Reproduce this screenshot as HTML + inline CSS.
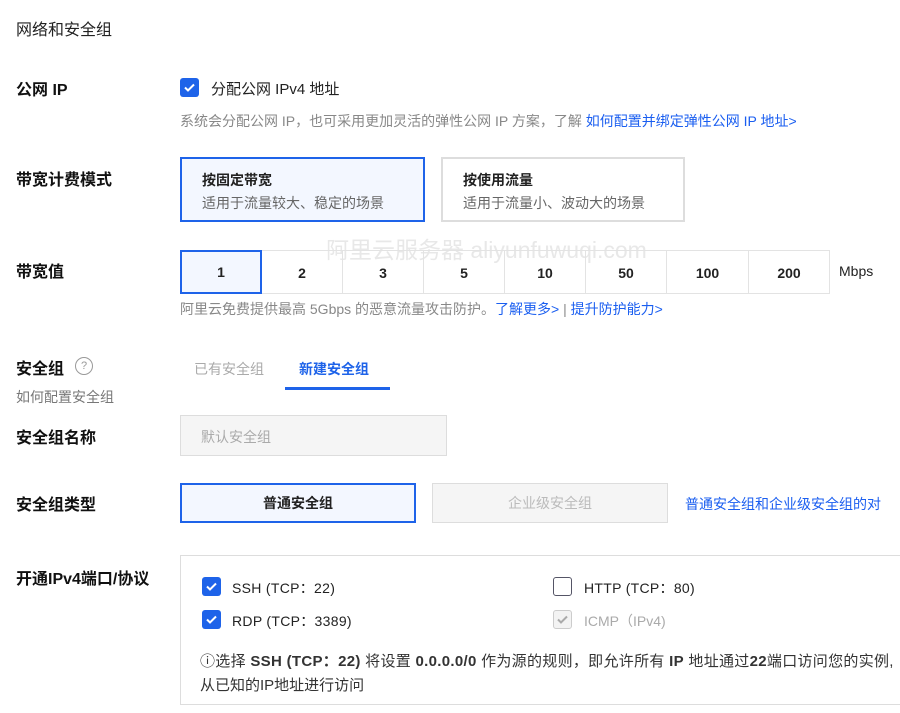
<!DOCTYPE html>
<html><head><meta charset="utf-8"><style>
body{margin:0;width:900px;height:713px;overflow:hidden;background:#fff;font-family:"Liberation Sans","Noto Sans CJK SC",sans-serif;color:#222;position:relative}
.a{position:absolute;white-space:nowrap}
.lb{font-size:16px;font-weight:bold;color:#111}
.g{color:#888;font-size:14px}
.bl{color:#1a5ef0}
.cb{position:absolute;width:19px;height:19px;border-radius:3px;background:#1e63e9}
.cb svg{position:absolute;left:3px;top:3px}
.seg{position:absolute;top:250px;height:44px;border:1px solid #e3e3e3;box-sizing:border-box;text-align:center;line-height:44px;font-size:14px;font-weight:bold;color:#222}
</style></head><body>
<div class="a" style="left:16px;top:16px;font-size:16px;color:#222">网络和安全组</div>

<div class="a lb" style="left:16px;top:76px">公网 IP</div>
<div class="cb" style="left:180px;top:78px"><svg width="13" height="13" viewBox="0 0 13 13"><path d="M2 6.5l3 3 6-6" stroke="#fff" stroke-width="2" fill="none"/></svg></div>
<div class="a" style="left:211px;top:78px;font-size:15px">分配公网 IPv4 地址</div>
<div class="a g" style="left:180px;top:111px">系统会分配公网 IP，也可采用更加灵活的弹性公网 IP 方案，了解 <span class="bl">如何配置并绑定弹性公网 IP 地址&gt;</span></div>

<div class="a lb" style="left:16px;top:166px">带宽计费模式</div>
<div class="a" style="left:180px;top:157px;width:245px;height:65px;box-sizing:border-box;border:2px solid #1e63e9;background:#f3f7ff"></div>
<div class="a" style="left:202px;top:170px;font-size:14px;font-weight:bold">按固定带宽</div>
<div class="a g" style="left:202px;top:193px;color:#666">适用于流量较大、稳定的场景</div>
<div class="a" style="left:441px;top:157px;width:244px;height:65px;box-sizing:border-box;border:2px solid #ddd"></div>
<div class="a" style="left:463px;top:170px;font-size:14px;font-weight:bold">按使用流量</div>
<div class="a g" style="left:463px;top:193px;color:#666">适用于流量小、波动大的场景</div>

<div class="a" style="left:326px;top:231px;font-size:23px;color:#e8e8e8">阿里云服务器 aliyunfuwuqi.com</div>

<div class="a lb" style="left:16px;top:258px">带宽值</div>
<div class="seg" style="left:261px;width:82px">2</div>
<div class="seg" style="left:342px;width:82px">3</div>
<div class="seg" style="left:423px;width:82px">5</div>
<div class="seg" style="left:504px;width:82px">10</div>
<div class="seg" style="left:585px;width:82px">50</div>
<div class="seg" style="left:666px;width:83px">100</div>
<div class="seg" style="left:748px;width:82px">200</div>
<div class="seg" style="left:180px;width:82px;border:2px solid #1e63e9;background:#f3f7ff;line-height:40px">1</div>
<div class="a" style="left:839px;top:263px;font-size:14px">Mbps</div>
<div class="a g" style="left:180px;top:299px">阿里云免费提供最高 5Gbps 的恶意流量攻击防护。<span class="bl">了解更多&gt;</span> | <span class="bl">提升防护能力&gt;</span></div>

<div class="a lb" style="left:16px;top:355px">安全组</div>
<div class="a" style="left:75px;top:357px;width:16px;height:16px;border:1px solid #999;border-radius:50%;font-size:11px;color:#999;text-align:center;line-height:16px">?</div>
<div class="a g" style="left:16px;top:387px;color:#777">如何配置安全组</div>
<div class="a g" style="left:194px;top:359px;color:#aaa">已有安全组</div>
<div class="a" style="left:299px;top:359px;font-size:14px;font-weight:bold;color:#1e63e9">新建安全组</div>
<div class="a" style="left:285px;top:387px;width:105px;height:3px;background:#1e63e9"></div>

<div class="a lb" style="left:16px;top:424px">安全组名称</div>
<div class="a" style="left:180px;top:415px;width:267px;height:41px;box-sizing:border-box;border:1px solid #ddd;background:#f5f5f5"></div>
<div class="a g" style="left:201px;top:427px;color:#aaa">默认安全组</div>

<div class="a lb" style="left:16px;top:491px">安全组类型</div>
<div class="a" style="left:180px;top:483px;width:236px;height:40px;box-sizing:border-box;border:2px solid #1e63e9;background:#f3f7ff;text-align:center;line-height:36px;font-size:14px;font-weight:bold">普通安全组</div>
<div class="a" style="left:432px;top:483px;width:236px;height:40px;box-sizing:border-box;border:1px solid #ddd;background:#f5f5f5;text-align:center;line-height:38px;font-size:14px;color:#bbb">企业级安全组</div>
<div class="a bl" style="left:685px;top:494px;font-size:14px">普通安全组和企业级安全组的对</div>

<div class="a lb" style="left:16px;top:565px">开通IPv4端口/协议</div>
<div class="a" style="left:180px;top:555px;width:740px;height:150px;box-sizing:border-box;border:1px solid #ddd"></div>
<div class="cb" style="left:202px;top:577px"><svg width="13" height="13" viewBox="0 0 13 13"><path d="M2 6.5l3 3 6-6" stroke="#fff" stroke-width="2" fill="none"/></svg></div>
<div class="a" style="left:232px;top:578px;font-size:14px;letter-spacing:0.3px">SSH (TCP：22)</div>
<div class="cb" style="left:202px;top:610px"><svg width="13" height="13" viewBox="0 0 13 13"><path d="M2 6.5l3 3 6-6" stroke="#fff" stroke-width="2" fill="none"/></svg></div>
<div class="a" style="left:232px;top:611px;font-size:14px;letter-spacing:0.3px">RDP (TCP：3389)</div>
<div class="a" style="left:553px;top:577px;width:19px;height:19px;box-sizing:border-box;border:1.5px solid #556;border-radius:3px"></div>
<div class="a" style="left:584px;top:578px;font-size:14px;letter-spacing:0.3px">HTTP (TCP：80)</div>
<div class="a" style="left:553px;top:610px;width:19px;height:19px;box-sizing:border-box;border:1px solid #ccc;border-radius:3px;background:#f3f3f3"><svg style="position:absolute;left:2px;top:2px" width="13" height="13" viewBox="0 0 13 13"><path d="M2 6.5l3 3 6-6" stroke="#aaa" stroke-width="2" fill="none"/></svg></div>
<div class="a" style="left:584px;top:611px;font-size:14px;color:#aaa">ICMP（IPv4)</div>
<div class="a" style="left:200px;top:650px;font-size:15px;letter-spacing:0.3px;color:#333">ⓘ选择 <b>SSH (TCP：22)</b> 将设置 <b>0.0.0.0/0</b> 作为源的规则，即允许所有 <b>IP</b> 地址通过<b>22</b>端口访问您的实例,</div>
<div class="a" style="left:200px;top:674px;font-size:15px;color:#333">从已知的IP地址进行访问</div>
</body></html>
